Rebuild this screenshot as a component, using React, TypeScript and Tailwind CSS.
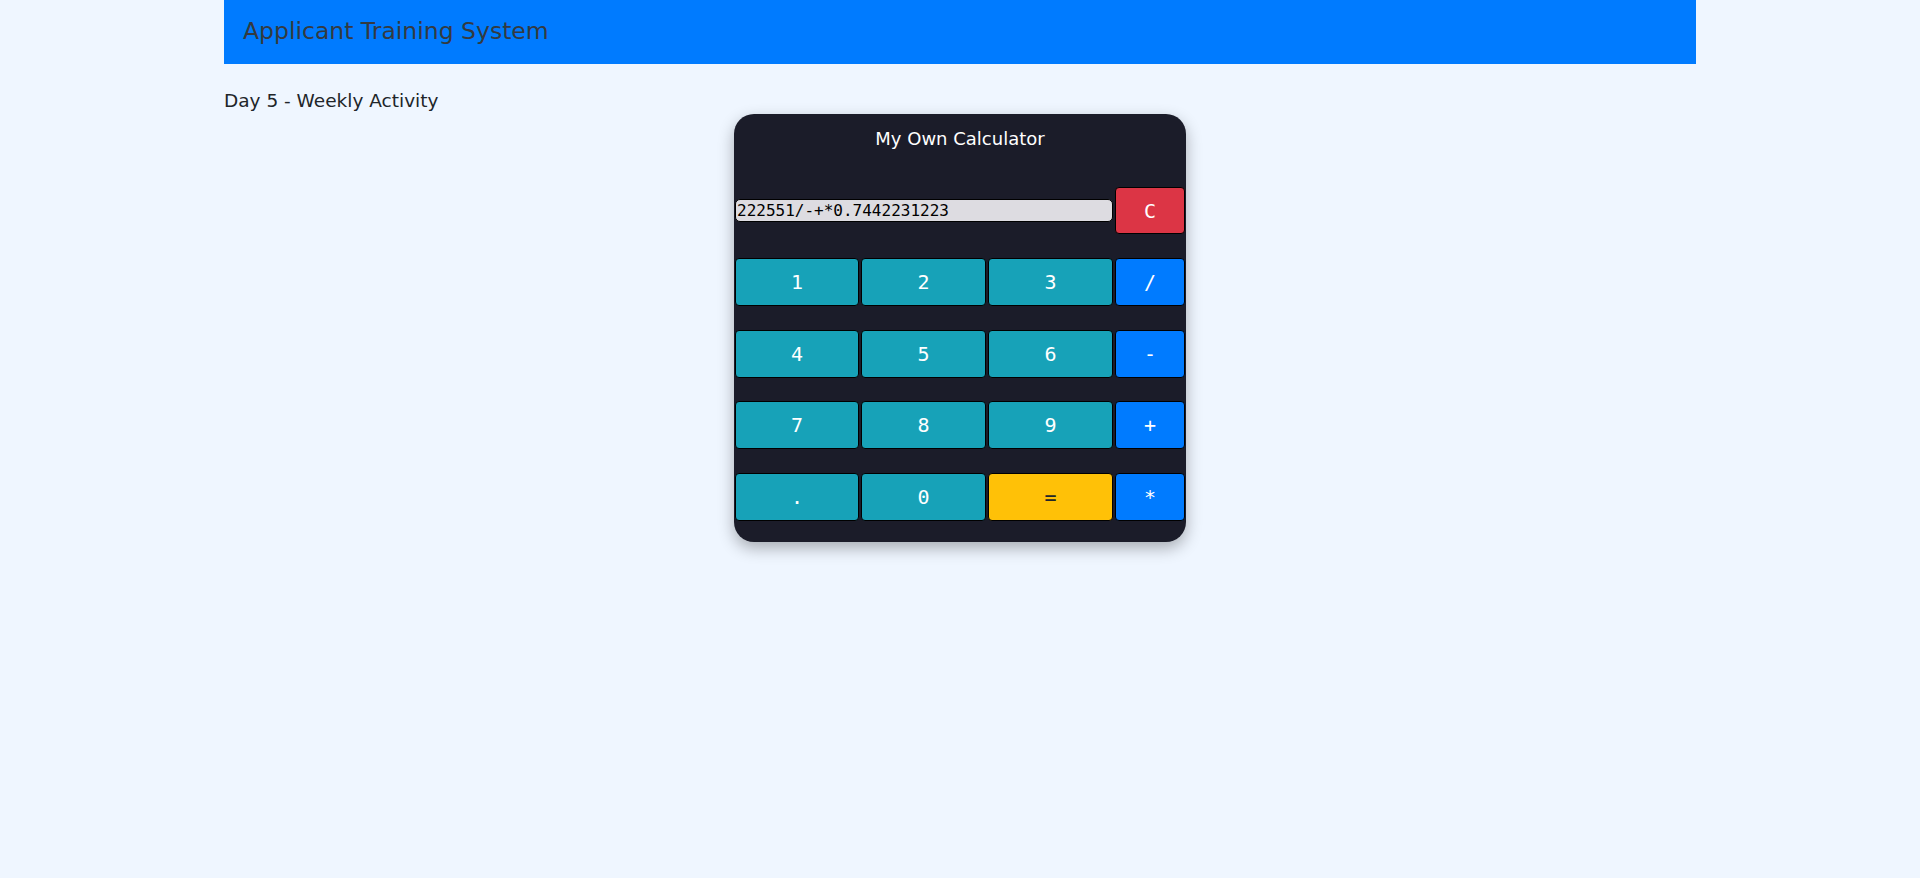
const keys: { label: string; color: string }[][] = [
  [
    { label: '1', color: 'teal' },
    { label: '2', color: 'teal' },
    { label: '3', color: 'teal' },
    { label: '/', color: 'blue' },
  ],
  [
    { label: '4', color: 'teal' },
    { label: '5', color: 'teal' },
    { label: '6', color: 'teal' },
    { label: '-', color: 'blue' },
  ],
  [
    { label: '7', color: 'teal' },
    { label: '8', color: 'teal' },
    { label: '9', color: 'teal' },
    { label: '+', color: 'blue' },
  ],
  [
    { label: '.', color: 'teal' },
    { label: '0', color: 'teal' },
    { label: '=', color: 'yellow' },
    { label: '*', color: 'blue' },
  ],
];

const colorClass: Record<string, string> = {
  teal: 'bg-[#17a2b8] text-white',
  blue: 'bg-[#007bff] text-white',
  yellow: 'bg-[#ffc107] text-[#212529]',
};

const mono = { fontFamily: '"DejaVu Sans Mono", monospace' };

function Key({ label, color }: { label: string; color: string }) {
  return (
    <button
      className={`h-[48px] w-full rounded-[4px] border border-black text-[20px] ${colorClass[color]}`}
      style={mono}
    >
      {label}
    </button>
  );
}

export default function App() {
  return (
    <div
      className="min-h-[878px] bg-[#eff6ff]"
      style={{ fontFamily: '"DejaVu Sans", "Open Sans", sans-serif' }}
    >
      <div className="mx-auto w-[1472px]">
        {/* Header */}
        <header className="flex h-[64px] items-center bg-[#007bff] px-[19px]">
          <span className="text-[23.5px] text-[#343a40]">Applicant Training System</span>
        </header>

        <div className="mt-[25px] text-[18.5px] leading-[24px] text-[#212529]">
          Day 5 - Weekly Activity
        </div>

        {/* Calculator */}
        <div className="mx-auto mt-[1px] flex w-[452px] flex-col rounded-[20px] bg-[#1b1c29] px-px pt-[11px] pb-[10px] shadow-[0_6px_16px_rgba(0,0,0,0.3)]">
          <div className="text-center text-[18px] leading-[28px] text-white">My Own Calculator</div>

          <div className="mt-[21.75px] grid grid-cols-[124px_125px_125px_70px] gap-x-[2px]">
            <div className="col-span-3 flex h-[71.5px] items-center">
              <div
                className="flex h-[23px] w-full items-center rounded-[5px] border border-black bg-[#dddce1] px-px text-[16px] text-black"
                style={mono}
              >
                222551/-+*0.7442231223
              </div>
            </div>
            <div className="flex h-[71.5px] items-center">
              <button
                className="h-[47px] w-full rounded-[4px] border border-black bg-[#dc3545] text-[20px] text-white"
                style={mono}
              >
                C
              </button>
            </div>

            {keys.map((row, i) =>
              row.map((k) => (
                <div key={`${i}-${k.label}`} className="flex h-[71.5px] items-center">
                  <Key label={k.label} color={k.color} />
                </div>
              )),
            )}
          </div>
        </div>
      </div>
    </div>
  );
}
